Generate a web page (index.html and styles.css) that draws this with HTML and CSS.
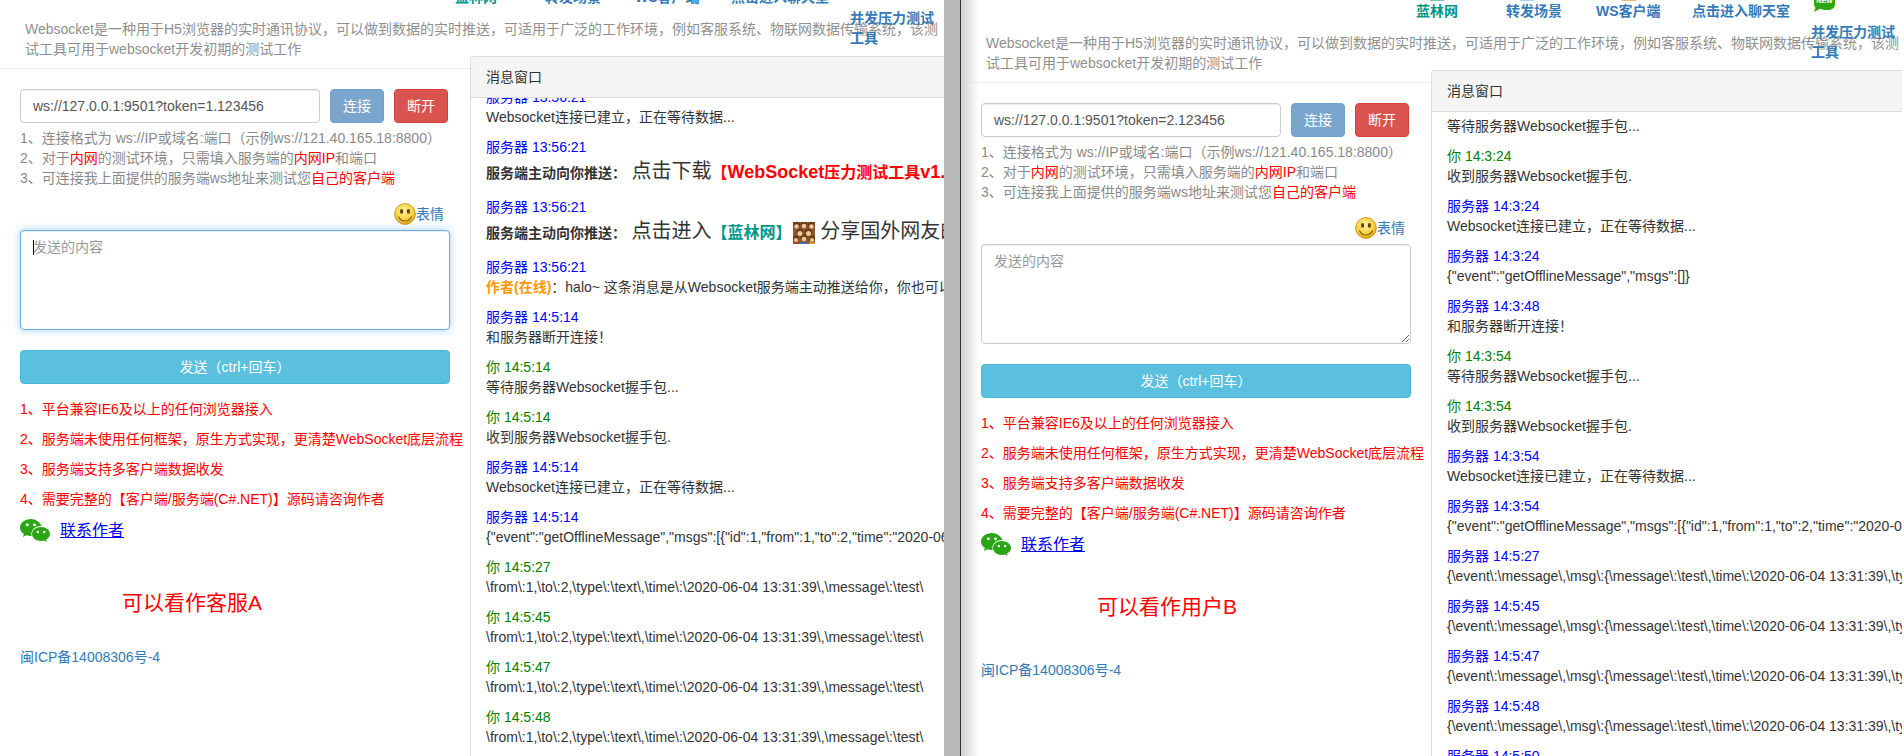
FILE: index.html
```html
<!DOCTYPE html>
<html lang="zh-CN">
<head>
  <meta charset="UTF-8">
  <title>Websocket测试工具</title>
  <link rel="stylesheet" href="styles.css">
</head>
<body>
  <svg class="icon-defs" aria-hidden="true">
    <defs>
      <radialGradient id="faceFill" cx="45%" cy="35%" r="70%">
        <stop offset="0" stop-color="#fff3a0"/>
        <stop offset="0.6" stop-color="#f7d23e"/>
        <stop offset="1" stop-color="#d89a10"/>
      </radialGradient>
      <symbol id="face" viewBox="0 0 22 22">
        <circle cx="11" cy="11" r="10.4" fill="url(#faceFill)" stroke="#c08a10" stroke-width="0.8"/>
        <ellipse cx="7.6" cy="8.4" rx="1.6" ry="2.3" fill="#6b3a12"/>
        <ellipse cx="14.4" cy="8.4" rx="1.6" ry="2.3" fill="#6b3a12"/>
        <path d="M4.4 13.4c1.6 3.4 3.9 4.6 6.6 4.6s5-1.2 6.6-4.6" fill="none" stroke="#8a5a12" stroke-width="1.1"/>
      </symbol>
      <symbol id="wechat" viewBox="0 0 30 24">
        <path d="M11 0C5 0 0 3.700 0 8.500c0 2.700 1.500 5 3.900 6.600L2.900 18l3.500-1.800c1.400.4 3 .7 4.600.7h.7a7 7 0 0 1-.3-2c0-4.500 4.200-8 9.600-8h.6C19.700 3 15.700 0 11 0z" fill="#2aa515"/>
        <circle cx="7.300" cy="5.800" r="1.500" fill="#fff"/>
        <circle cx="14.500" cy="5.800" r="1.500" fill="#fff"/>
        <path d="M21 8c-5 0-9 3.100-9 7s4 7 9 7c1 0 2-.1 2.900-.4l2.800 1.500-.8-2.400c2.500-1.300 4.100-3.400 4.100-5.700 0-3.900-4-7-9-7z" fill="#2aa515"/>
        <circle cx="17.800" cy="13" r="1.200" fill="#fff"/>
        <circle cx="24.200" cy="13" r="1.200" fill="#fff"/>
      </symbol>
      <symbol id="crowd" viewBox="0 0 22 22">
        <rect width="22" height="22" fill="#8a5a2c"/>
        <g fill="#6e3c14">
          <circle cx="3.500" cy="3" r="3.500"/><circle cx="11" cy="2.500" r="3.500"/><circle cx="18.500" cy="3" r="3.500"/>
          <circle cx="7" cy="10" r="3.600"/><circle cx="15.500" cy="10" r="3.600"/>
          <circle cx="3" cy="16.500" r="3"/><circle cx="11" cy="15.500" r="3.400"/><circle cx="19" cy="16.500" r="3"/>
        </g>
        <g fill="#f0c79a">
          <circle cx="3.500" cy="4.500" r="2.300"/><circle cx="11" cy="4" r="2.300"/><circle cx="18.500" cy="4.500" r="2.300"/>
          <circle cx="7" cy="11.500" r="2.500"/><circle cx="15.500" cy="11.500" r="2.500"/>
          <circle cx="3" cy="18" r="2"/><circle cx="11" cy="17" r="2.300"/><circle cx="19" cy="18" r="2"/>
        </g>
        <rect x="7" y="20" width="8" height="2" fill="#3f6fb0"/>
        <rect x="0" y="20.500" width="6" height="1.500" fill="#b23a2a"/>
        <rect x="16" y="20.500" width="6" height="1.500" fill="#e0a030"/>
      </symbol>
    </defs>
  </svg>

  <div class="window window-a">
    <div class="page">
      <div class="topnav">
        <a class="nav-item nav-teal"><i class="nav-tip tip-teal"></i>蓝林网</a>
        <a class="nav-item"><i class="nav-tip tip-blue"></i>转发场景</a>
        <a class="nav-item"><i class="nav-tip tip-orange"></i>WS客户端</a>
        <a class="nav-item">点击进入聊天室</a>
        <a class="nav-item nav-tool">并发压力测试工具</a>
      </div>
      <p class="intro">Websocket是一种用于H5浏览器的实时通讯协议，可以做到数据的实时推送，可适用于广泛的工作环境，例如客服系统、物联网数据传输系统，该测试工具可用于websocket开发初期的测试工作</p>
      <div class="main">
        <div class="side">
          <div class="connect">
            <input class="ws-input" type="text" value="ws://127.0.0.1:9501?token=1.123456">
            <button class="btn btn-connect">连接</button>
            <button class="btn btn-close">断开</button>
          </div>
          <div class="help">
            <div>1、连接格式为 ws://IP或域名:端口（示例ws://121.40.165.18:8800）</div>
            <div>2、对于<span class="red">内网</span>的测试环境，只需填入服务端的<span class="red">内网IP</span>和端口</div>
            <div>3、可连接我上面提供的服务端ws地址来测试您<span class="red">自己的客户端</span></div>
          </div>
          <div class="emoji-row"><svg class="face"><use href="#face"/></svg><a>表情</a></div>
          <div class="msg-box">
            <textarea class="msg-input is-focus" placeholder="发送的内容"></textarea>
            <i class="caret"></i>
          </div>
          <button class="btn btn-send">发送（ctrl+回车）</button>
          <ul class="notes">
            <li>1、平台兼容IE6及以上的任何浏览器接入</li>
            <li>2、服务端未使用任何框架，原生方式实现，更清楚WebSocket底层流程</li>
            <li>3、服务端支持多客户端数据收发</li>
            <li>4、需要完整的【客户端/服务端(C#.NET)】源码请咨询作者</li>
          </ul>
          <div class="contact"><svg class="wechat"><use href="#wechat"/></svg><a href="#">联系作者</a></div>
          <div class="role">可以看作客服A</div>
          <a class="icp">闽ICP备14008306号-4</a>
        </div>
        <div class="panel">
          <div class="panel-head">消息窗口</div>
          <div class="panel-body">
            <div class="msgs">
              <div class="msg"><div class="from-srv">服务器 13:56:21</div><div>Websocket连接已建立，正在等待数据...</div></div>
              <div class="msg"><div class="from-srv">服务器 13:56:21</div><div class="push"><b class="push-tag">服务端主动向你推送：</b> 点击下载<b class="push-red">【<span class="latin">WebSocket</span>压力测试工具<span class="latin">v1.0</span>】</b></div></div>
              <div class="msg"><div class="from-srv">服务器 13:56:21</div><div class="push"><b class="push-tag">服务端主动向你推送：</b> 点击进入<b class="push-teal">【蓝林网】</b><svg class="crowd"><use href="#crowd"/></svg> 分享国外网友的精彩内容</div></div>
              <div class="msg"><div class="from-srv">服务器 13:56:21</div><div><b class="author">作者(在线)</b>：halo~ 这条消息是从Websocket服务端主动推送给你，你也可以通过接口主动推送消息给客户端</div></div>
              <div class="msg"><div class="from-srv">服务器 14:5:14</div><div>和服务器断开连接！</div></div>
              <div class="msg"><div class="from-me">你 14:5:14</div><div>等待服务器Websocket握手包...</div></div>
              <div class="msg"><div class="from-me">你 14:5:14</div><div>收到服务器Websocket握手包.</div></div>
              <div class="msg"><div class="from-srv">服务器 14:5:14</div><div>Websocket连接已建立，正在等待数据...</div></div>
              <div class="msg"><div class="from-srv">服务器 14:5:14</div><div>{"event":"getOfflineMessage","msgs":[{"id":1,"from":1,"to":2,"time":"2020-06-04 13:31:39","type":"text"}]}</div></div>
              <div class="msg"><div class="from-me">你 14:5:27</div><div>\from\:1,\to\:2,\type\:\text\,\time\:\2020-06-04 13:31:39\,\message\:\test\</div></div>
              <div class="msg"><div class="from-me">你 14:5:45</div><div>\from\:1,\to\:2,\type\:\text\,\time\:\2020-06-04 13:31:39\,\message\:\test\</div></div>
              <div class="msg"><div class="from-me">你 14:5:47</div><div>\from\:1,\to\:2,\type\:\text\,\time\:\2020-06-04 13:31:39\,\message\:\test\</div></div>
              <div class="msg"><div class="from-me">你 14:5:48</div><div>\from\:1,\to\:2,\type\:\text\,\time\:\2020-06-04 13:31:39\,\message\:\test\</div></div>
            </div>
          </div>
        </div>
      </div>
    </div>
  </div>

  <div class="gutter"></div>

  <div class="window window-b">
    <div class="page">
      <div class="topnav">
        <a class="nav-item nav-teal"><i class="nav-tip tip-teal"></i>蓝林网</a>
        <a class="nav-item"><i class="nav-tip tip-blue"></i>转发场景</a>
        <a class="nav-item"><i class="nav-tip tip-orange"></i>WS客户端</a>
        <a class="nav-item">点击进入聊天室</a>
        <a class="nav-item nav-tool">
          <svg class="new-badge" viewBox="0 0 23 12"><path d="M1 -10h21v14c0 4-3 6-8 6-3 0-5-.4-7-1.200L1 12l1.500-4C1.500 6.500 1 5.500 1 4z" fill="#2ea80f"/><text x="11.500" y="3" class="new-text">NEW</text></svg>
          并发压力测试工具
        </a>
      </div>
      <p class="intro">Websocket是一种用于H5浏览器的实时通讯协议，可以做到数据的实时推送，可适用于广泛的工作环境，例如客服系统、物联网数据传输系统，该测试工具可用于websocket开发初期的测试工作</p>
      <div class="main">
        <div class="side">
          <div class="connect">
            <input class="ws-input" type="text" value="ws://127.0.0.1:9501?token=2.123456">
            <button class="btn btn-connect">连接</button>
            <button class="btn btn-close">断开</button>
          </div>
          <div class="help">
            <div>1、连接格式为 ws://IP或域名:端口（示例ws://121.40.165.18:8800）</div>
            <div>2、对于<span class="red">内网</span>的测试环境，只需填入服务端的<span class="red">内网IP</span>和端口</div>
            <div>3、可连接我上面提供的服务端ws地址来测试您<span class="red">自己的客户端</span></div>
          </div>
          <div class="emoji-row"><svg class="face"><use href="#face"/></svg><a>表情</a></div>
          <div class="msg-box">
            <textarea class="msg-input" placeholder="发送的内容"></textarea>
          </div>
          <button class="btn btn-send">发送（ctrl+回车）</button>
          <ul class="notes">
            <li>1、平台兼容IE6及以上的任何浏览器接入</li>
            <li>2、服务端未使用任何框架，原生方式实现，更清楚WebSocket底层流程</li>
            <li>3、服务端支持多客户端数据收发</li>
            <li>4、需要完整的【客户端/服务端(C#.NET)】源码请咨询作者</li>
          </ul>
          <div class="contact"><svg class="wechat"><use href="#wechat"/></svg><a href="#">联系作者</a></div>
          <div class="role">可以看作用户B</div>
          <a class="icp">闽ICP备14008306号-4</a>
        </div>
        <div class="panel">
          <div class="panel-head">消息窗口</div>
          <div class="panel-body">
            <div class="msgs">
              <div class="msg"><div>等待服务器Websocket握手包...</div></div>
              <div class="msg"><div class="from-me">你 14:3:24</div><div>收到服务器Websocket握手包.</div></div>
              <div class="msg"><div class="from-srv">服务器 14:3:24</div><div>Websocket连接已建立，正在等待数据...</div></div>
              <div class="msg"><div class="from-srv">服务器 14:3:24</div><div>{"event":"getOfflineMessage","msgs":[]}</div></div>
              <div class="msg"><div class="from-srv">服务器 14:3:48</div><div>和服务器断开连接！</div></div>
              <div class="msg"><div class="from-me">你 14:3:54</div><div>等待服务器Websocket握手包...</div></div>
              <div class="msg"><div class="from-me">你 14:3:54</div><div>收到服务器Websocket握手包.</div></div>
              <div class="msg"><div class="from-srv">服务器 14:3:54</div><div>Websocket连接已建立，正在等待数据...</div></div>
              <div class="msg"><div class="from-srv">服务器 14:3:54</div><div>{"event":"getOfflineMessage","msgs":[{"id":1,"from":1,"to":2,"time":"2020-06-04 13:31:39","type":"text"}]}</div></div>
              <div class="msg"><div class="from-srv">服务器 14:5:27</div><div>{\event\:\message\,\msg\:{\message\:\test\,\time\:\2020-06-04 13:31:39\,\type\:\text\}}</div></div>
              <div class="msg"><div class="from-srv">服务器 14:5:45</div><div>{\event\:\message\,\msg\:{\message\:\test\,\time\:\2020-06-04 13:31:39\,\type\:\text\}}</div></div>
              <div class="msg"><div class="from-srv">服务器 14:5:47</div><div>{\event\:\message\,\msg\:{\message\:\test\,\time\:\2020-06-04 13:31:39\,\type\:\text\}}</div></div>
              <div class="msg"><div class="from-srv">服务器 14:5:48</div><div>{\event\:\message\,\msg\:{\message\:\test\,\time\:\2020-06-04 13:31:39\,\type\:\text\}}</div></div>
              <div class="msg"><div class="from-srv">服务器 14:5:50</div><div>{\event\:\message\,\msg\:{\message\:\test\,\time\:\2020-06-04 13:31:39\,\type\:\text\}}</div></div>
            </div>
          </div>
        </div>
      </div>
    </div>
  </div>
</body>
</html>
```

FILE: styles.css
```css
* { box-sizing: border-box; }
html, body {
  height: 100%;
  overflow: hidden;
}
body {
  margin: 0;
  display: flex;
  background-color: #fff;
  color: #333;
  font-family: "Liberation Sans", "Noto Sans CJK SC", sans-serif;
  font-size: 14px;
  line-height: 20px;
}
.icon-defs {
  position: absolute;
  width: 0;
  height: 0;
}

/* two browser windows side by side */
.window {
  position: relative;
  flex: none;
  height: 756px;
  overflow: hidden;
  background-color: #fff;
}
.window-a { width: 944px; }
.window-b { width: 941px; }
.window-a .page { margin-top: -14px; }
.window-b::after {
  content: "";
  position: absolute;
  top: 0;
  bottom: 0;
  left: 0;
  width: 18px;
  background: linear-gradient(to right, #d2d2d2, rgba(255, 255, 255, 0));
  pointer-events: none;
}
.gutter {
  flex: none;
  width: 17px;
  background-color: #b9b9b9;
  border-right: 1px solid #333;
}

/* top nav, clipped by the window edge */
.topnav {
  position: relative;
  z-index: 2;
  display: grid;
  grid-template-columns: 90px 90px 96px 119px 85px;
  align-items: start;
  height: 33px;
  padding: 1px 0 0 455px;
}
.nav-item {
  position: relative;
  color: #337ab7;
  font-weight: bold;
}
.nav-teal { color: #009688; }
.nav-tool { padding-top: 21px; }
.nav-tip {
  position: absolute;
  top: -1px;
  left: 14px;
  width: 14px;
  height: 1px;
}
.tip-teal { background-color: #7cc4bc; }
.tip-blue { background-color: #a9d2ec; }
.tip-orange { left: 26px; background-color: #f0b27a; }
.new-badge {
  position: absolute;
  top: -1px;
  left: 2px;
  width: 23px;
  height: 12px;
}
.new-text {
  fill: #fff;
  font-size: 7px;
  font-weight: bold;
  text-anchor: middle;
}
.intro {
  margin: 0;
  padding: 0 0 9px 25px;
  border-bottom: 1px solid #eee;
  color: #8f8f8f;
}

.main { display: flex; }
.side {
  flex: none;
  width: 470px;
  padding: 20px 20px 0;
}
.connect { display: flex; }
.ws-input {
  width: 300px;
  height: 34px;
  padding: 6px 12px;
  border: 1px solid #ccc;
  border-radius: 4px;
  color: #555;
  font: inherit;
  box-shadow: inset 0 1px 1px rgba(0, 0, 0, .075);
}
.btn {
  height: 34px;
  padding: 6px 12px;
  border: 1px solid transparent;
  border-radius: 4px;
  color: #fff;
  font: inherit;
}
.btn-connect {
  width: 54px;
  margin-left: 10px;
  background-color: #7aa5cc;
  border-color: #72a0c9;
}
.btn-close {
  width: 54px;
  margin-left: 10px;
  background-color: #d9534f;
  border-color: #d43f3a;
}
.btn-send {
  display: block;
  width: 430px;
  margin-top: 20px;
  background-color: #5bc0de;
  border-color: #46b8da;
}
.help {
  margin-top: 5px;
  color: #8a8a8a;
}
.red { color: #f00; }
.emoji-row {
  display: flex;
  justify-content: flex-end;
  align-items: center;
  height: 22px;
  margin-top: 15px;
  padding-right: 6px;
  color: #337ab7;
}
.face {
  width: 22px;
  height: 22px;
}
.msg-box {
  position: relative;
  margin-top: 5px;
}
.msg-input {
  display: block;
  width: 430px;
  height: 100px;
  padding: 6px 12px;
  border: 1px solid #ccc;
  border-radius: 4px;
  color: #555;
  font: inherit;
  outline: none;
  box-shadow: inset 0 1px 1px rgba(0, 0, 0, .075);
}
.msg-input::placeholder { color: #999; }
.msg-input.is-focus {
  border-color: #66afe9;
  resize: none;
  box-shadow: inset 0 1px 1px rgba(0, 0, 0, .075), 0 0 8px rgba(102, 175, 233, .6);
}
.caret {
  position: absolute;
  top: 10px;
  left: 13px;
  width: 1px;
  height: 15px;
  background-color: #000;
}
.notes {
  margin: 15px 0 0;
  padding: 0;
  list-style: none;
  color: #f00;
  white-space: nowrap;
}
.notes li { margin-bottom: 10px; }
.contact {
  display: flex;
  align-items: center;
  height: 24px;
  font-size: 16px;
}
.contact a { color: #00e; }
.wechat {
  width: 30px;
  height: 24px;
  margin-right: 10px;
}
.role {
  margin-top: 45px;
  padding-left: 102px;
  color: #f00;
  font-size: 21px;
  line-height: 30px;
}
.window-b .role {
  margin-top: 35px;
  margin-bottom: 38px;
  padding-left: 116px;
}
.icp {
  display: block;
  margin-top: 29px;
  color: #337ab7;
}
.window-b .icp { margin-top: 0; }

/* message window */
.panel {
  position: relative;
  flex: 1;
  min-width: 0;
  height: 720px;
  margin-top: -13px;
  background-color: #fff;
  border-left: 1px solid #ddd;
  border-top: 1px solid #ddd;
  border-top-left-radius: 4px;
  overflow: hidden;
}
.panel-head {
  height: 41px;
  padding: 10px 15px;
  background-color: #f5f5f5;
  border-bottom: 1px solid #ddd;
}
.panel-body {
  height: 680px;
  padding-left: 15px;
  overflow: hidden;
  white-space: nowrap;
}
.window-a .msgs { margin-top: -11px; }
.window-b .msgs { margin-top: 4px; }
.msg { margin-bottom: 10px; }
.from-srv { color: #00f; }
.from-me { color: #008000; }
.push { font-size: 20px; line-height: 28px; }
.push-tag { font-size: 14px; }
.push-red { color: #f00; font-size: 16px; }
.push-red .latin { font-size: 18px; }
.push-teal { color: #009688; font-size: 16px; }
.crowd {
  width: 22px;
  height: 22px;
  margin-left: 1px;
  vertical-align: middle;
}
.author { color: #ff9800; }
```
